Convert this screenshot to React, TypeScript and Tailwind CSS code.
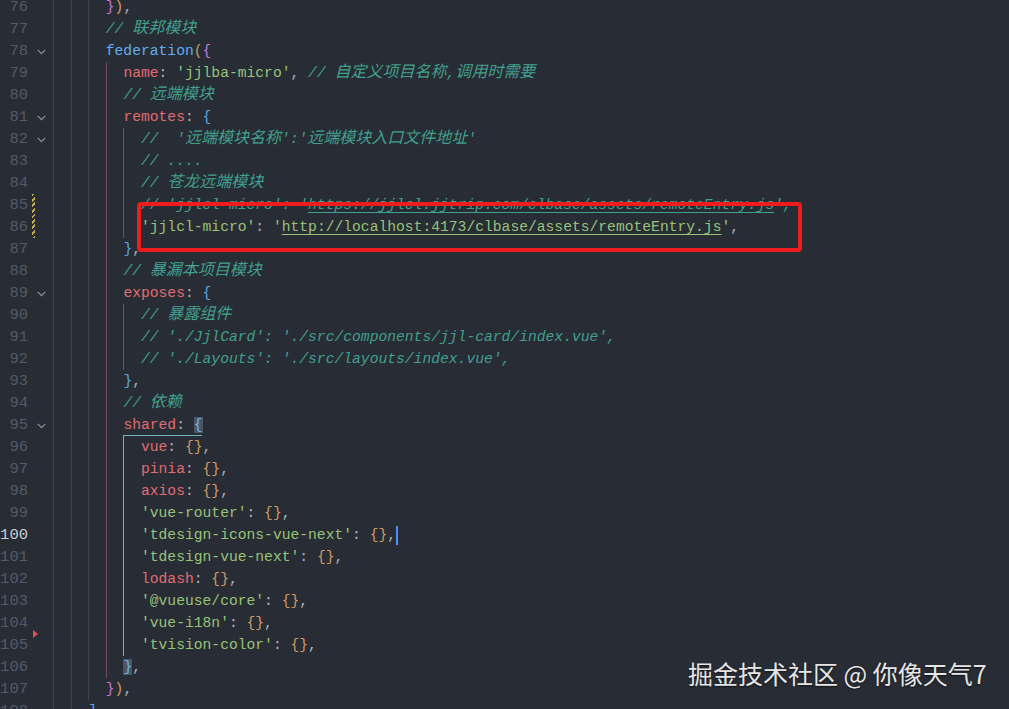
import React from "react";

type Kind = "c" | "cu" | "p" | "s" | "su" | "f" | "o" | "g" | "m" | "b" | "bh";
type Line = { n: number; i: number; fold?: boolean; t: [string, Kind][] };

const kindClass: Record<Kind, string> = {
  c: "text-[#41a08e] italic",
  cu: "text-[#41a08e] italic underline decoration-[#41a08e] underline-offset-[3px]",
  p: "text-[#e06c75]",
  s: "text-[#98c379]",
  su: "text-[#98c379] underline decoration-[#98c379] underline-offset-[3px]",
  f: "text-[#61afef]",
  o: "text-[#abb2bf]",
  g: "text-[#d19a66]",
  m: "text-[#c678dd]",
  b: "text-[#5aa7e6]",
  bh: "text-[#6cb6e8] bg-[#4d5666]",
};

const entry = (key: string, quoted: boolean, n: number): Line => ({
  n,
  i: 10,
  t: [
    [key, quoted ? "s" : "p"],
    [": ", "o"],
    ["{}", "g"],
    [",", "o"],
  ],
});

const lines: Line[] = [
  { n: 76, i: 6, t: [["}", "m"], [")", "g"], [",", "o"]] },
  { n: 77, i: 6, t: [["// 联邦模块", "c"]] },
  { n: 78, i: 6, fold: true, t: [["federation", "f"], ["(", "g"], ["{", "m"]] },
  {
    n: 79,
    i: 8,
    t: [
      ["name", "p"],
      [": ", "o"],
      ["'jjlba-micro'", "s"],
      [", ", "o"],
      ["// 自定义项目名称,调用时需要", "c"],
    ],
  },
  { n: 80, i: 8, t: [["// 远端模块", "c"]] },
  { n: 81, i: 8, fold: true, t: [["remotes", "p"], [": ", "o"], ["{", "b"]] },
  { n: 82, i: 10, fold: true, t: [["//  '远端模块名称':'远端模块入口文件地址'", "c"]] },
  { n: 83, i: 10, t: [["// ....", "c"]] },
  { n: 84, i: 10, t: [["// 苍龙远端模块", "c"]] },
  {
    n: 85,
    i: 10,
    t: [
      ["// 'jjlcl-micro': '", "c"],
      ["https://jjlcl.jjtrip.com/clbase/assets/remoteEntry.js", "cu"],
      ["',", "c"],
    ],
  },
  {
    n: 86,
    i: 10,
    t: [
      ["'jjlcl-micro'", "s"],
      [": ", "o"],
      ["'", "s"],
      ["http://localhost:4173/clbase/assets/remoteEntry.js", "su"],
      ["'", "s"],
      [",", "o"],
    ],
  },
  { n: 87, i: 8, t: [["}", "b"], [",", "o"]] },
  { n: 88, i: 8, t: [["// 暴漏本项目模块", "c"]] },
  { n: 89, i: 8, fold: true, t: [["exposes", "p"], [": ", "o"], ["{", "b"]] },
  { n: 90, i: 10, t: [["// 暴露组件", "c"]] },
  { n: 91, i: 10, t: [["// './JjlCard': './src/components/jjl-card/index.vue',", "c"]] },
  { n: 92, i: 10, t: [["// './Layouts': './src/layouts/index.vue',", "c"]] },
  { n: 93, i: 8, t: [["}", "b"], [",", "o"]] },
  { n: 94, i: 8, t: [["// 依赖", "c"]] },
  { n: 95, i: 8, fold: true, t: [["shared", "p"], [": ", "o"], ["{", "bh"]] },
  entry("vue", false, 96),
  entry("pinia", false, 97),
  entry("axios", false, 98),
  entry("'vue-router'", true, 99),
  entry("'tdesign-icons-vue-next'", true, 100),
  entry("'tdesign-vue-next'", true, 101),
  entry("lodash", false, 102),
  entry("'@vueuse/core'", true, 103),
  entry("'vue-i18n'", true, 104),
  entry("'tvision-color'", true, 105),
  { n: 106, i: 8, t: [["}", "bh"], [",", "o"]] },
  { n: 107, i: 6, t: [["}", "m"], [")", "g"], [",", "o"]] },
  { n: 108, i: 4, t: [["]", "b"]] },
];

function guideClass(n: number, level: number) {
  if (level === 3) return "border-[#6f4d66]";
  if (level === 4) {
    if (n >= 96 && n <= 105) return "border-[#6fb3bd]";
    return "border-[#5a5c68]";
  }
  return "border-[#3f444d]";
}

// CJK glyphs come out a touch wider than the mono cells in the editor
function withCjk(text: string) {
  return text.split(/([\u3000-\u9fff\uff00-\uffef]+)/).map((part, k) =>
    /[\u3000-\u9fff]/.test(part) ? (
      <span key={k} className="text-[16px]">
        {part}
      </span>
    ) : (
      part
    )
  );
}

function Chevron() {
  return (
    <svg width="13" height="13" viewBox="0 0 12 12" className="ml-[7px]">
      <path d="M2.5 4.5 L6 8 L9.5 4.5" fill="none" stroke="#8a8f98" strokeWidth="1.2" />
    </svg>
  );
}

function Row({ line }: { line: Line }) {
  const levels = Array.from({ length: line.i / 2 }, (_, k) => k);
  return (
    <div className="flex h-[22px] leading-[22px] whitespace-pre">
      <div
        className={`w-[28px] shrink-0 text-right text-[15.5px] ${
          line.n === 100 ? "text-[#c8ccd4]" : "text-[#535a67]"
        }`}
      >
        {line.n}
      </div>
      <div className="relative flex w-[25px] shrink-0 items-center">
        {(line.n === 85 || line.n === 86) && (
          <div className="absolute left-[4px] top-0 h-[22px] w-[3px] bg-[repeating-linear-gradient(-45deg,#b8a84e_0_2px,transparent_2px_4px)]" />
        )}
        {line.n === 105 && (
          <div className="absolute left-[5px] top-[-4px] h-0 w-0 border-y-[4px] border-l-[5px] border-y-transparent border-l-[#d9534f]" />
        )}
        {line.fold && <Chevron />}
      </div>
      <div className="relative flex">
        {levels.map((lv) => (
          <span
            key={lv}
            className={`inline-block h-[22px] w-[17.6px] border-l ${guideClass(line.n, lv)}`}
          />
        ))}
        <span className="relative">
          {line.n === 95 && (
            <span className="absolute bottom-0 left-0 h-px w-[79px] bg-[#6fb3bd]" />
          )}
          {line.t.map(([text, kind], k) => (
            <span key={k} className={kindClass[kind]}>
              {kind === "c" || kind === "cu" ? withCjk(text) : text}
            </span>
          ))}
          {line.n === 100 && (
            <span className="inline-block h-[19px] w-[2px] bg-[#528bff] align-middle" />
          )}
        </span>
      </div>
    </div>
  );
}

export default function App() {
  return (
    <div className="relative h-[709px] w-[1009px] overflow-hidden bg-[#282c34] font-['Liberation_Mono','Noto_Sans_CJK_SC',monospace] text-[14.67px]">
      <div className="-mt-[4px]">
        {lines.map((line) => (
          <Row key={line.n} line={line} />
        ))}
      </div>

      <div className="absolute left-[137px] top-[202px] h-[50px] w-[665px] rounded-[4px] border-[4px] border-[#ee1c1c]" />

      <div className="absolute left-[688px] top-[655px] font-['Noto_Sans_CJK_SC',sans-serif] text-[25px] leading-[36px] text-[#e6e6e6] [text-shadow:0_1px_2px_rgba(0,0,0,0.6)]">
        掘金技术社区 @ 你像天气7
      </div>
    </div>
  );
}
